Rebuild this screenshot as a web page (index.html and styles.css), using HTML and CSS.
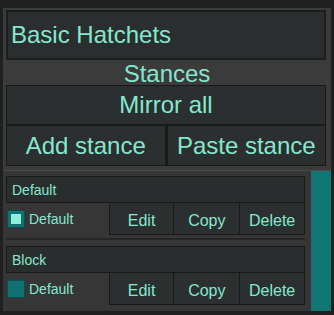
FILE: index.html
```html
<!DOCTYPE html>
<html>
<head>
<meta charset="utf-8">
<link rel="stylesheet" href="styles.css">
</head>
<body>
<div class="panel">
  <div class="title">Basic Hatchets</div>
  <div class="heading">Stances</div>
  <div class="btn wide">Mirror all</div>
  <div class="row2">
    <div class="btn half">Add stance</div>
    <div class="btn half">Paste stance</div>
  </div>
  <div class="list">
    <div class="items">
      <div class="item">
        <div class="ihead">Default</div>
        <div class="irow">
          <div class="check">
            <span class="box on"><span class="dot"></span></span>
            <span class="clabel">Default</span>
          </div>
          <div class="sbtn">Edit</div>
          <div class="sbtn">Copy</div>
          <div class="sbtn">Delete</div>
        </div>
      </div>
      <div class="item">
        <div class="ihead">Block</div>
        <div class="irow">
          <div class="check">
            <span class="box"></span>
            <span class="clabel">Default</span>
          </div>
          <div class="sbtn">Edit</div>
          <div class="sbtn">Copy</div>
          <div class="sbtn">Delete</div>
        </div>
      </div>
    </div>
    <div class="scroll"></div>
  </div>
</div>
</body>
</html>
```
FILE: styles.css
```css
html, body {
  margin: 0;
  padding: 0;
  background: #202020;
  width: 334px;
  height: 315px;
  overflow: hidden;
  font-family: "Liberation Sans", Arial, sans-serif;
  color: #84e8cf;
}
.panel {
  margin: 8px 3px 0 3px;
  width: 328px;
  height: 302px;
  background: #3b3b3b;
  box-sizing: border-box;
  padding-top: 2px;
  display: flex;
  flex-direction: column;
}
.title {
  margin-left: 3px;
  width: 320px;
  height: 50px;
  box-sizing: border-box;
  border: 2px solid #1b1e1e;
  background: #2a2e2e;
  font-size: 24px;
  line-height: 46px;
  padding-left: 3px;
}
.heading {
  height: 25px;
  line-height: 27px;
  font-size: 24px;
  text-align: center;
}
.btn {
  box-sizing: border-box;
  border: 1px solid #181a1a;
  background: #2b2f2f;
  font-size: 24px;
  text-align: center;
}
.wide {
  margin-left: 3px;
  width: 320px;
  height: 40px;
  line-height: 38px;
}
.row2 {
  margin-left: 3px;
  width: 320px;
  display: flex;
}
.half {
  flex: 1;
  height: 41px;
  line-height: 39px;
}
.half + .half {
  border-left: 2px solid #181a1a;
}
.list {
  margin-top: 4px;
  border-top: 1px solid #4a4a4a;
  background: #363636;
  flex: 1;
  display: flex;
  margin-bottom: 1px;
}
.items {
  width: 302px;
  padding: 5px 0 0 3px;
}
.item {
  padding-bottom: 3px;
  border-bottom: 2px solid #262626;
  margin-bottom: 6px;
}
.item:last-child {
  border-bottom: none;
  margin-bottom: 0;
}
.ihead {
  width: 299px;
  height: 27px;
  box-sizing: border-box;
  border: 1px solid #181a1a;
  background: #2a2d2d;
  font-size: 14px;
  line-height: 26px;
  padding-left: 5px;
}
.irow {
  display: flex;
  height: 32px;
  width: 299px;
}
.check {
  width: 102px;
  display: flex;
  align-items: center;
  padding-left: 1px;
}
.box {
  width: 18px;
  height: 18px;
  box-sizing: border-box;
  background: #127070;
  border: 1px solid #0d4f4f;
  display: flex;
  align-items: center;
  justify-content: center;
}
.dot {
  width: 10px;
  height: 10px;
  background: #90eedb;
}
.clabel {
  margin-left: 4px;
  font-size: 14px;
}
.sbtn {
  width: 66px;
  box-sizing: border-box;
  border: 1px solid #181a1a;
  border-top: none;
  background: #2b2f2f;
  font-size: 16px;
  text-align: center;
  line-height: 30px;
  padding-top: 3px;
}
.sbtn + .sbtn {
  border-left: none;
}
.sbtn:last-child {
  width: 65px;
}
.scroll {
  margin-left: 6px;
  width: 20px;
  height: 140px;
  background: #107575;
}
```
